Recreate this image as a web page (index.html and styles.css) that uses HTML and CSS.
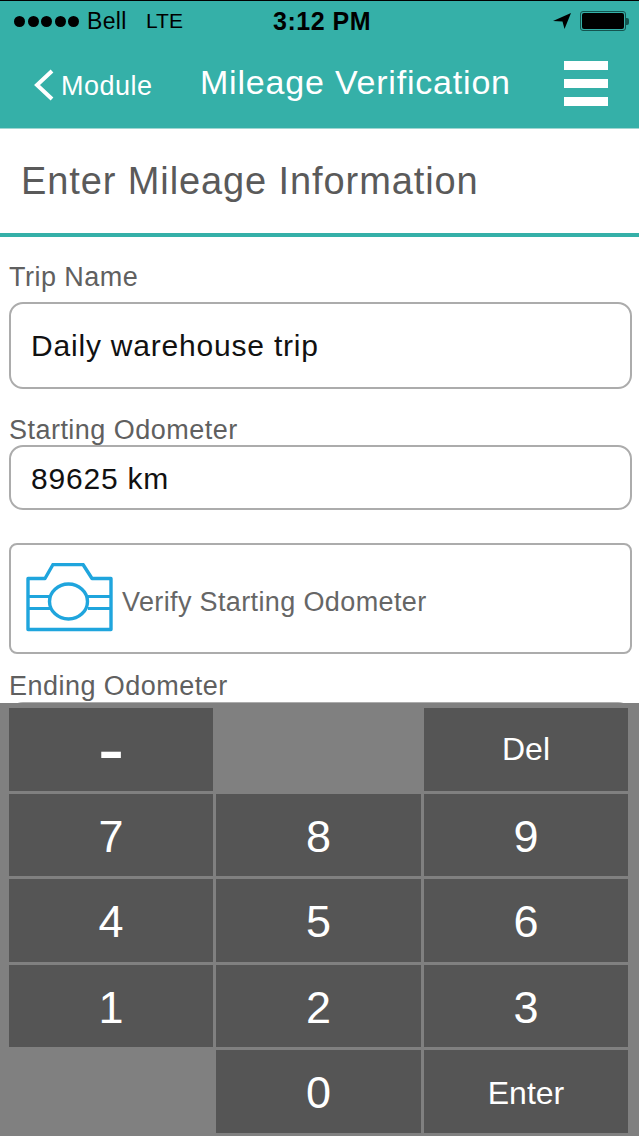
FILE: index.html
```html
<!DOCTYPE html>
<html lang="en">
<head>
    <meta charset="UTF-8">
    <meta name="viewport" content="width=device-width, initial-scale=1.0">
    <title>Mileage Verification</title>
    <link rel="stylesheet" href="styles.css">
</head>
<body>
<div class="screen">
    <div class="top">
        <div class="status-bar">
            <div class="dots"><i></i><i></i><i></i><i></i><i></i></div>
            <span class="carrier">Bell</span>
            <span class="network">LTE</span>
            <strong class="clock">3:12 PM</strong>
            <svg class="arrow" width="18" height="16" viewBox="0 0 18 16"><path d="M18 0 L0 8 L9.5 8.5 L11.5 16 Z" fill="#000"/></svg>
            <div class="battery"><div class="battery-fill"></div></div>
            <div class="battery-nub"></div>
        </div>
        <div class="nav-bar">
            <svg class="chevron" width="22" height="32" viewBox="0 0 22 32"><path d="M19 2 L4 16 L19 30" fill="none" stroke="#fff" stroke-width="4"/></svg>
            <span class="back-label">Module</span>
            <span class="nav-title">Mileage Verification</span>
            <div class="menu-icon"><i></i><i></i><i></i></div>
        </div>
    </div>

    <h1 class="page-title">Enter Mileage Information</h1>

    <form class="mileage-form">
        <label class="field-label label-trip">Trip Name</label>
        <div class="input input-tall">Daily warehouse trip</div>
        <label class="field-label label-start">Starting Odometer</label>
        <div class="input input-short">89625 km</div>
        <div class="verify-box">
            <svg class="camera" width="88" height="69" viewBox="0 0 88 69">
                <path d="M2 15.5 H19 L27 1.5 H57 L66 15.5 H85 V66.5 H2 Z" fill="none" stroke="#1fa5dd" stroke-width="3.4" stroke-linejoin="round"/>
                <path d="M2 33.5 H24 M2 45.5 H24 M62 33.5 H85 M62 45.5 H85" fill="none" stroke="#1fa5dd" stroke-width="3"/>
                <ellipse cx="42.5" cy="38.5" rx="19" ry="17.5" fill="none" stroke="#1fa5dd" stroke-width="3.4"/>
            </svg>
            <span class="verify-text">Verify Starting Odometer</span>
        </div>
        <label class="field-label label-end">Ending Odometer</label>
        <div class="input input-short"></div>
    </form>

    <div class="keypad">
        <button type="button" class="key key-minus">-</button>
        <div class="key-blank"></div>
        <button type="button" class="key key-del">Del</button>
        <button type="button" class="key">7</button>
        <button type="button" class="key">8</button>
        <button type="button" class="key">9</button>
        <button type="button" class="key">4</button>
        <button type="button" class="key">5</button>
        <button type="button" class="key">6</button>
        <button type="button" class="key">1</button>
        <button type="button" class="key">2</button>
        <button type="button" class="key">3</button>
        <div class="key-blank"></div>
        <button type="button" class="key">0</button>
        <button type="button" class="key key-enter">Enter</button>
    </div>
</div>
</body>
</html>
```

FILE: styles.css
```css
* {
    box-sizing: border-box;
}
body {
    margin: 0;
    font-family: "Liberation Sans", Arial, sans-serif;
    background: #fff;
}
.screen {
    position: relative;
    width: 639px;
    height: 1136px;
    overflow: hidden;
}
.top {
    height: 129px;
    background: #35b0a8;
    border-top: 1px solid #000;
    border-bottom: 1px solid #9fd6d2;
}
.status-bar {
    display: flex;
    align-items: center;
    height: 40px;
    padding-left: 14px;
    color: #000;
    font-size: 23px;
}
.dots {
    display: flex;
    gap: 2.5px;
}
.dots i {
    width: 11px;
    height: 11px;
    border-radius: 50%;
    background: #000;
}
.carrier {
    margin-left: 8px;
    width: 59px;
    letter-spacing: 0.3px;
}
.network {
    width: 127px;
    font-size: 21px;
}
.clock {
    width: 280px;
    font-size: 25px;
    letter-spacing: 0.5px;
}
.arrow {
    margin-right: 9px;
}
.battery {
    width: 46px;
    height: 20px;
    padding: 1px;
    border: 1px solid #14544f;
    border-radius: 3px;
}
.battery-fill {
    height: 100%;
    background: #000;
    border-radius: 2px;
}
.battery-nub {
    width: 3px;
    height: 7px;
    background: #14544f;
    border-radius: 0 2px 2px 0;
}
.nav-bar {
    display: flex;
    align-items: center;
    height: 87px;
    padding-left: 33px;
    color: #fff;
}
.chevron {
    flex: none;
}
.back-label {
    width: 139px;
    margin-left: 6px;
    padding-top: 3px;
    font-size: 27px;
    letter-spacing: 0.5px;
}
.nav-title {
    width: 364px;
    font-size: 34px;
    letter-spacing: 0.8px;
    padding-bottom: 4px;
}
.menu-icon {
    display: flex;
    flex-direction: column;
    gap: 9px;
    width: 44px;
    margin-bottom: 2px;
}
.menu-icon i {
    height: 9px;
    background: #fff;
}
.page-title {
    height: 108px;
    margin: 0;
    padding: 28px 0 0 21px;
    border-bottom: 4px solid #35b0a8;
    color: #5a5a5a;
    font-size: 38px;
    font-weight: normal;
    letter-spacing: 0.9px;
    line-height: 48px;
}
.mileage-form {
    padding: 0 7px 0 9px;
}
.field-label {
    display: block;
    color: #606060;
    font-size: 27px;
    letter-spacing: 0.47px;
    line-height: 32px;
}
.label-trip {
    padding-top: 24px;
    height: 65px;
}
.label-start {
    padding-top: 25px;
    height: 56px;
}
.label-end {
    padding-top: 16px;
    height: 48px;
}
.input {
    display: flex;
    align-items: center;
    padding-left: 20px;
    border: 2px solid #acacac;
    border-radius: 14px;
    color: #111;
    font-size: 30px;
    letter-spacing: 0.8px;
    background: #fff;
}
.input-tall {
    height: 87px;
}
.input-short {
    height: 65px;
    padding-top: 2px;
}
.verify-box {
    display: flex;
    align-items: center;
    height: 111px;
    margin-top: 33px;
    padding-left: 15px;
    border: 2px solid #acacac;
    border-radius: 8px;
}
.verify-text {
    margin: 7px 0 0 8px;
    color: #666;
    font-size: 27px;
    letter-spacing: 0.37px;
}
.camera {
    flex: none;
    margin-bottom: 2px;
}
.keypad {
    position: absolute;
    left: 0;
    right: 0;
    bottom: 0;
    height: 433px;
    display: grid;
    grid-template-columns: 204px 205px 204px;
    grid-template-rows: repeat(5, 82.5px);
    column-gap: 3px;
    row-gap: 3px;
    padding: 5px 0 0 9px;
    background: #808080;
}
.key {
    padding: 4px 0 0;
    border: 0;
    background: #555;
    color: #fff;
    font-family: inherit;
    font-size: 45px;
}
.key-del,
.key-enter {
    font-size: 32px;
}
.key-del {
    padding: 0;
}
.key-minus {
    padding: 0;
    font-size: 80px;
    line-height: 1;
}
```
